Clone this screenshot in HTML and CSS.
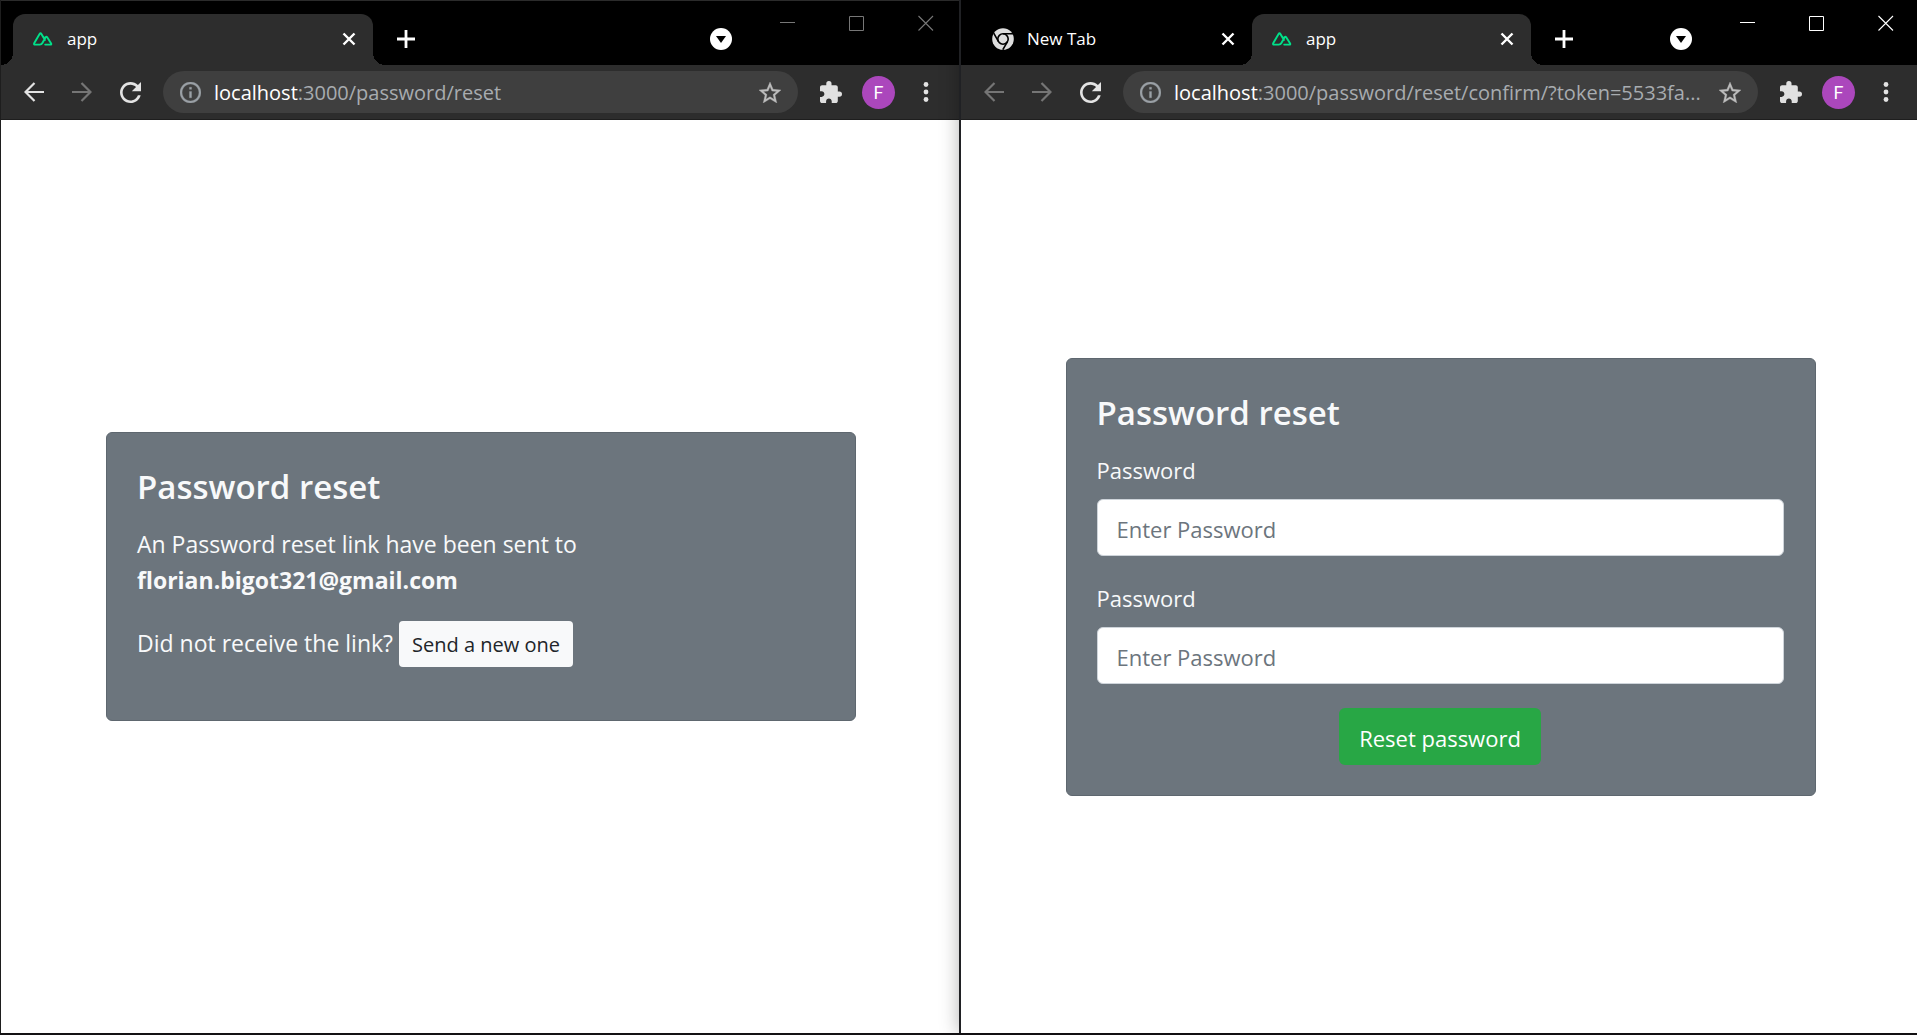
FILE: index.html
```html
<!DOCTYPE html>
<html lang="en">
<head>
<meta charset="utf-8">
<meta name="viewport" content="width=device-width, initial-scale=1">
<title>Password reset</title>
<link rel="stylesheet" href="styles.css">
</head>
<body>
<svg class="sprite" aria-hidden="true">
  <symbol id="nuxt" viewBox="0 0 20 14"><path d="M6.800 12.600H2.200Q.4 12.600 1.300 11L6.600 2Q7.500.6 8.400 2L10.600 5.800M6.800 12.600Q8.600 12.600 9.400 11L12.600 5.200Q13.400 4 14.200 5.200L18 11.200Q18.900 12.600 17.300 12.600H12.200M10.300 4.800L12 8" fill="none" stroke="#00e18a" stroke-width="1.900" stroke-linejoin="round" stroke-linecap="round"/></symbol>
  <symbol id="chrome" viewBox="0 0 22 22"><circle cx="11" cy="11" r="10.800" fill="#dedede"/><circle cx="11" cy="11" r="5.200" fill="#dedede" stroke="#000" stroke-width="1.600"/><path d="M11 5.800H21M6.500 13.600L1.700 5.200M15.500 13.600L10.800 21.700" fill="none" stroke="#000" stroke-width="1.600"/></symbol>
  <symbol id="cross" viewBox="0 0 14 14"><path d="M1.500 1.500L12.500 12.500M12.500 1.500L1.500 12.500" stroke="#fff" stroke-width="2.400"/></symbol>
  <symbol id="plus" viewBox="0 0 18 18"><path d="M9 0V18M0 9H18" stroke="#fff" stroke-width="2.800"/></symbol>
  <symbol id="chevron" viewBox="0 0 22 22"><circle cx="11" cy="11" r="11" fill="#fff"/><path d="M6 8H16L11 15Z" fill="#000"/></symbol>
  <symbol id="min" viewBox="0 0 16 16"><path d="M0 7.500H15" stroke="currentColor"/></symbol>
  <symbol id="max" viewBox="0 0 16 16"><path d="M.5 1.500H14.500V15.500H.5Z" fill="none" stroke="currentColor"/></symbol>
  <symbol id="quit" viewBox="0 0 16 16"><path d="M.5 1L15 15.500M15 1L.5 15.500" stroke="currentColor" stroke-width="1.100"/></symbol>
  <symbol id="back" viewBox="0 0 20 20"><path d="M20 10H2M10.500 1L1.500 10L10.500 19" fill="none" stroke="currentColor" stroke-width="2.200"/></symbol>
  <symbol id="forward" viewBox="0 0 20 20"><path d="M0 10H18M9.500 1L18.500 10L9.500 19" fill="none" stroke="currentColor" stroke-width="2.200"/></symbol>
  <symbol id="reload" viewBox="4 4 16 16"><path d="M17.650 6.350C16.200 4.900 14.210 4 12 4c-4.420 0-7.990 3.580-7.990 8s3.570 8 7.990 8c3.730 0 6.840-2.550 7.730-6h-2.080c-.82 2.330-3.040 4-5.650 4-3.310 0-6-2.690-6-6s2.690-6 6-6c1.660 0 3.140.69 4.220 1.780L13 11h7V4z" fill="#e3e3e3"/></symbol>
  <symbol id="info" viewBox="2 2 20 20"><path d="M11 17h2v-6h-2zm1-15C6.480 2 2 6.480 2 12s4.480 10 10 10 10-4.480 10-10S17.520 2 12 2zm0 18c-4.410 0-8-3.590-8-8s3.590-8 8-8 8 3.590 8 8-3.590 8-8 8zM11 9h2V7h-2z" fill="#9aa0a6" stroke="#9aa0a6" stroke-width=".3"/></symbol>
  <symbol id="star" viewBox="2 2 20 19"><path d="M22 9.240l-7.190-.62L12 2 9.190 8.630 2 9.240l5.460 4.730L5.820 21 12 17.270 18.180 21l-1.630-7.030zM12 15.400l-3.760 2.270 1-4.280-3.320-2.880 4.380-.38L12 6.100l1.710 4.040 4.380.38-3.320 2.880 1 4.280z" fill="#bdbdbd" stroke="#bdbdbd" stroke-width=".3"/></symbol>
  <symbol id="puzzle" viewBox="2 1 21 21"><path d="M20.500 11H19V7c0-1.100-.9-2-2-2h-4V3.500a2.500 2.500 0 0 0-5 0V5H4c-1.100 0-1.990.9-1.990 2v3.800H3.500c1.490 0 2.700 1.210 2.700 2.700s-1.210 2.700-2.700 2.700H2V20c0 1.100.9 2 2 2h3.800v-1.500c0-1.490 1.210-2.700 2.700-2.700s2.700 1.210 2.700 2.700V22H17c1.100 0 2-.9 2-2v-4h1.500a2.500 2.500 0 0 0 0-5z" fill="#e0e0e0"/></symbol>
  <symbol id="dots" viewBox="0 0 6 20"><g fill="#e3e3e3"><circle cx="3" cy="2.500" r="2.400"/><circle cx="3" cy="10" r="2.400"/><circle cx="3" cy="17.500" r="2.400"/></g></symbol>
</svg>

<div class="desktop">
  <section class="window inactive">
    <header class="tabstrip">
      <div class="tabs">
        <div class="tab active wide">
          <svg class="favicon" width="20" height="14"><use href="#nuxt"/></svg>
          <span class="tab-title">app</span>
          <button class="icon-btn" aria-label="Close tab"><svg width="14" height="14"><use href="#cross"/></svg></button>
        </div>
      </div>
      <button class="icon-btn new-tab" aria-label="New tab"><svg width="18" height="18"><use href="#plus"/></svg></button>
      <button class="icon-btn search-tabs" aria-label="Search tabs"><svg width="22" height="22"><use href="#chevron"/></svg></button>
      <div class="controls">
        <button class="icon-btn" aria-label="Minimize"><svg width="16" height="16"><use href="#min"/></svg></button>
        <button class="icon-btn" aria-label="Maximize"><svg width="16" height="16"><use href="#max"/></svg></button>
        <button class="icon-btn" aria-label="Close"><svg width="16" height="16"><use href="#quit"/></svg></button>
      </div>
    </header>
    <nav class="toolbar">
      <div class="nav-buttons">
        <button class="icon-btn" aria-label="Back"><svg width="20" height="20"><use href="#back"/></svg></button>
        <button class="icon-btn dim" aria-label="Forward"><svg width="20" height="20"><use href="#forward"/></svg></button>
        <button class="icon-btn" aria-label="Reload"><svg width="21" height="21"><use href="#reload"/></svg></button>
      </div>
      <div class="address">
        <svg class="info" width="21" height="21"><use href="#info"/></svg>
        <span class="url"><span class="host">localhost</span>:3000/password/reset</span>
        <button class="icon-btn" aria-label="Bookmark"><svg width="22" height="21"><use href="#star"/></svg></button>
      </div>
      <div class="actions">
        <button class="icon-btn" aria-label="Extensions"><svg width="22" height="22"><use href="#puzzle"/></svg></button>
        <button class="avatar" aria-label="Profile">F</button>
        <button class="icon-btn" aria-label="Menu"><svg width="6" height="20"><use href="#dots"/></svg></button>
      </div>
    </nav>
    <main class="page">
      <div class="card">
        <h1>Password reset</h1>
        <p>An Password reset link have been sent to<br><strong>florian.bigot321@gmail.com</strong></p>
        <p>Did not receive the link? <button class="btn btn-light">Send a new one</button></p>
      </div>
    </main>
  </section>

  <section class="window front">
    <header class="tabstrip">
      <div class="tabs">
        <div class="tab">
          <svg class="favicon" width="22" height="22"><use href="#chrome"/></svg>
          <span class="tab-title">New Tab</span>
          <button class="icon-btn" aria-label="Close tab"><svg width="14" height="14"><use href="#cross"/></svg></button>
        </div>
        <div class="tab active">
          <svg class="favicon" width="20" height="14"><use href="#nuxt"/></svg>
          <span class="tab-title">app</span>
          <button class="icon-btn" aria-label="Close tab"><svg width="14" height="14"><use href="#cross"/></svg></button>
        </div>
      </div>
      <button class="icon-btn new-tab" aria-label="New tab"><svg width="18" height="18"><use href="#plus"/></svg></button>
      <button class="icon-btn search-tabs" aria-label="Search tabs"><svg width="22" height="22"><use href="#chevron"/></svg></button>
      <div class="controls">
        <button class="icon-btn" aria-label="Minimize"><svg width="16" height="16"><use href="#min"/></svg></button>
        <button class="icon-btn" aria-label="Maximize"><svg width="16" height="16"><use href="#max"/></svg></button>
        <button class="icon-btn" aria-label="Close"><svg width="16" height="16"><use href="#quit"/></svg></button>
      </div>
    </header>
    <nav class="toolbar">
      <div class="nav-buttons">
        <button class="icon-btn dim" aria-label="Back"><svg width="20" height="20"><use href="#back"/></svg></button>
        <button class="icon-btn dim" aria-label="Forward"><svg width="20" height="20"><use href="#forward"/></svg></button>
        <button class="icon-btn" aria-label="Reload"><svg width="21" height="21"><use href="#reload"/></svg></button>
      </div>
      <div class="address">
        <svg class="info" width="21" height="21"><use href="#info"/></svg>
        <span class="url"><span class="host">localhost</span>:3000/password/reset/confirm/?token=5533fa...</span>
        <button class="icon-btn" aria-label="Bookmark"><svg width="22" height="21"><use href="#star"/></svg></button>
      </div>
      <div class="actions">
        <button class="icon-btn" aria-label="Extensions"><svg width="22" height="22"><use href="#puzzle"/></svg></button>
        <button class="avatar" aria-label="Profile">F</button>
        <button class="icon-btn" aria-label="Menu"><svg width="6" height="20"><use href="#dots"/></svg></button>
      </div>
    </nav>
    <main class="page">
      <form class="card">
        <h1>Password reset</h1>
        <div class="field">
          <label for="password">Password</label>
          <input id="password" type="password" placeholder="Enter Password">
        </div>
        <div class="field">
          <label for="confirm">Password</label>
          <input id="confirm" type="password" placeholder="Enter Password">
        </div>
        <div class="submit"><button class="btn btn-success" type="button">Reset password</button></div>
      </form>
    </main>
  </section>
</div>
</body>
</html>
```
FILE: styles.css
```css
* {
  box-sizing: border-box;
}

body {
  margin: 0;
  overflow: hidden;
  background: #141214;
  font-family: "Open Sans", "Noto Sans", sans-serif;
}

button,
input {
  font-family: inherit;
}

.sprite {
  display: none;
}

.desktop {
  display: grid;
  grid-template-columns: 1fr 1fr;
  min-height: 100vh;
  margin-right: -1px;
  padding-bottom: 2px;
}

.window {
  display: flex;
  flex-direction: column;
  min-width: 0;
  border-left: 1px solid #1e1e1e;
  background: #fff;
  color: #fff;
}

.front {
  position: relative;
  border-left: 2px solid #202124;
  box-shadow: 0 0 18px rgba(0, 0, 0, 0.3);
}

.icon-btn {
  display: flex;
  flex: none;
  padding: 0;
  border: 0;
  background: none;
  color: #fff;
}

/* Tab strip */
.tabstrip {
  display: flex;
  align-items: center;
  height: 65px;
  padding: 14px 25px 2px 12px;
  background: #000;
}

.inactive .tabstrip {
  border-top: 1px solid #2b2b2b;
  padding-top: 13px;
}

.front .tabstrip {
  padding-right: 24px;
}

.tabs {
  display: flex;
  align-self: stretch;
  margin-bottom: -2px;
}

.tab {
  position: relative;
  display: flex;
  align-items: center;
  width: 279px;
  padding: 0 17px 2px;
}

.tab.wide {
  width: 360px;
}

.tab.active {
  border-radius: 12px 12px 0 0;
  background: #2d2d2d;
}

.tab.active::before,
.tab.active::after {
  content: "";
  position: absolute;
  bottom: 0;
  width: 12px;
  height: 12px;
}

.tab.active::before {
  right: 100%;
  background: radial-gradient(circle at 0 0, #000 12px, #2d2d2d 12px);
}

.tab.active::after {
  left: 100%;
  background: radial-gradient(circle at 100% 0, #000 12px, #2d2d2d 12px);
}

.favicon {
  flex: none;
  width: 26px;
}

.tab-title {
  flex: 1;
  padding-left: 11px;
  font-size: 17px;
  line-height: 24px;
}

.new-tab {
  margin: 0 auto 0 24px;
}

.search-tabs {
  margin-right: 48px;
}

.controls {
  display: flex;
  align-self: flex-start;
  gap: 53px;
}

.controls .icon-btn {
  margin-top: 1px;
}

.inactive .controls .icon-btn {
  color: #777;
}

/* Toolbar */
.toolbar {
  display: flex;
  align-items: center;
  height: 55px;
  padding: 0 30px 0 23px;
  border-bottom: 1px solid #1e1e1e;
  background: #2d2d2d;
}

.front .toolbar {
  padding-right: 29px;
}

.nav-buttons {
  display: flex;
  gap: 28px;
  margin-right: 22px;
}

.nav-buttons .icon-btn {
  color: #e3e3e3;
}

.nav-buttons .dim {
  color: #757575;
}

.address {
  display: flex;
  flex: 1;
  align-items: center;
  min-width: 0;
  height: 42px;
  padding: 0 17px;
  border-radius: 21px;
  background: #3f3f3f;
}

.info {
  flex: none;
}

.url {
  flex: 1;
  min-width: 0;
  overflow: hidden;
  padding: 2px 0 0 13px;
  color: #a8acb0;
  font-size: 20px;
  line-height: 30px;
  white-space: nowrap;
}

.host {
  color: #fff;
}

.actions {
  display: flex;
  align-items: center;
  gap: 20px;
  margin-left: 22px;
}

.actions .icon-btn:last-child {
  margin-left: 8px;
}

.avatar {
  width: 33px;
  height: 33px;
  padding: 0;
  border: 0;
  border-radius: 50%;
  background: #ab47bc;
  color: #fff;
  font-family: Roboto, sans-serif;
  font-size: 18px;
}

/* Page content */
.page {
  display: flex;
  flex: 1;
  align-items: center;
  justify-content: center;
  padding: 24px 0 24px 2px;
}

.card {
  width: 100%;
  max-width: 750px;
  padding: 32px 31px 30px 30px;
  border: 1px solid #5e676f;
  border-radius: 6px;
  background: #6c757d;
  color: #f8f9fa;
  font-size: 23px;
  line-height: 36px;
}

.card h1 {
  margin: 0 0 18px;
  font-size: 33px;
  font-weight: 600;
  line-height: 43px;
}

.card p {
  margin: 0 0 23px;
}

.field {
  display: grid;
  gap: 11px;
  margin-bottom: 24px;
  font-size: 22px;
}

.field input {
  width: 100%;
  height: 57px;
  padding: 4px 19px 0;
  border: 1px solid #ced4da;
  border-radius: 6px;
  background: #fff;
  color: #495057;
  font-size: 22px;
}

.field input::placeholder {
  color: #6c757d;
  opacity: 1;
}

.btn {
  border: 0;
  border-radius: 6px;
}

.btn-light {
  height: 46px;
  padding: 0 13px;
  border-radius: 4px;
  background: #f8f9fa;
  color: #212529;
  font-size: 20px;
}

.submit {
  display: flex;
  justify-content: center;
}

.btn-success {
  height: 57px;
  padding: 4px 20px 0;
  background: #28a745;
  color: #fff;
  font-size: 22px;
}
```
